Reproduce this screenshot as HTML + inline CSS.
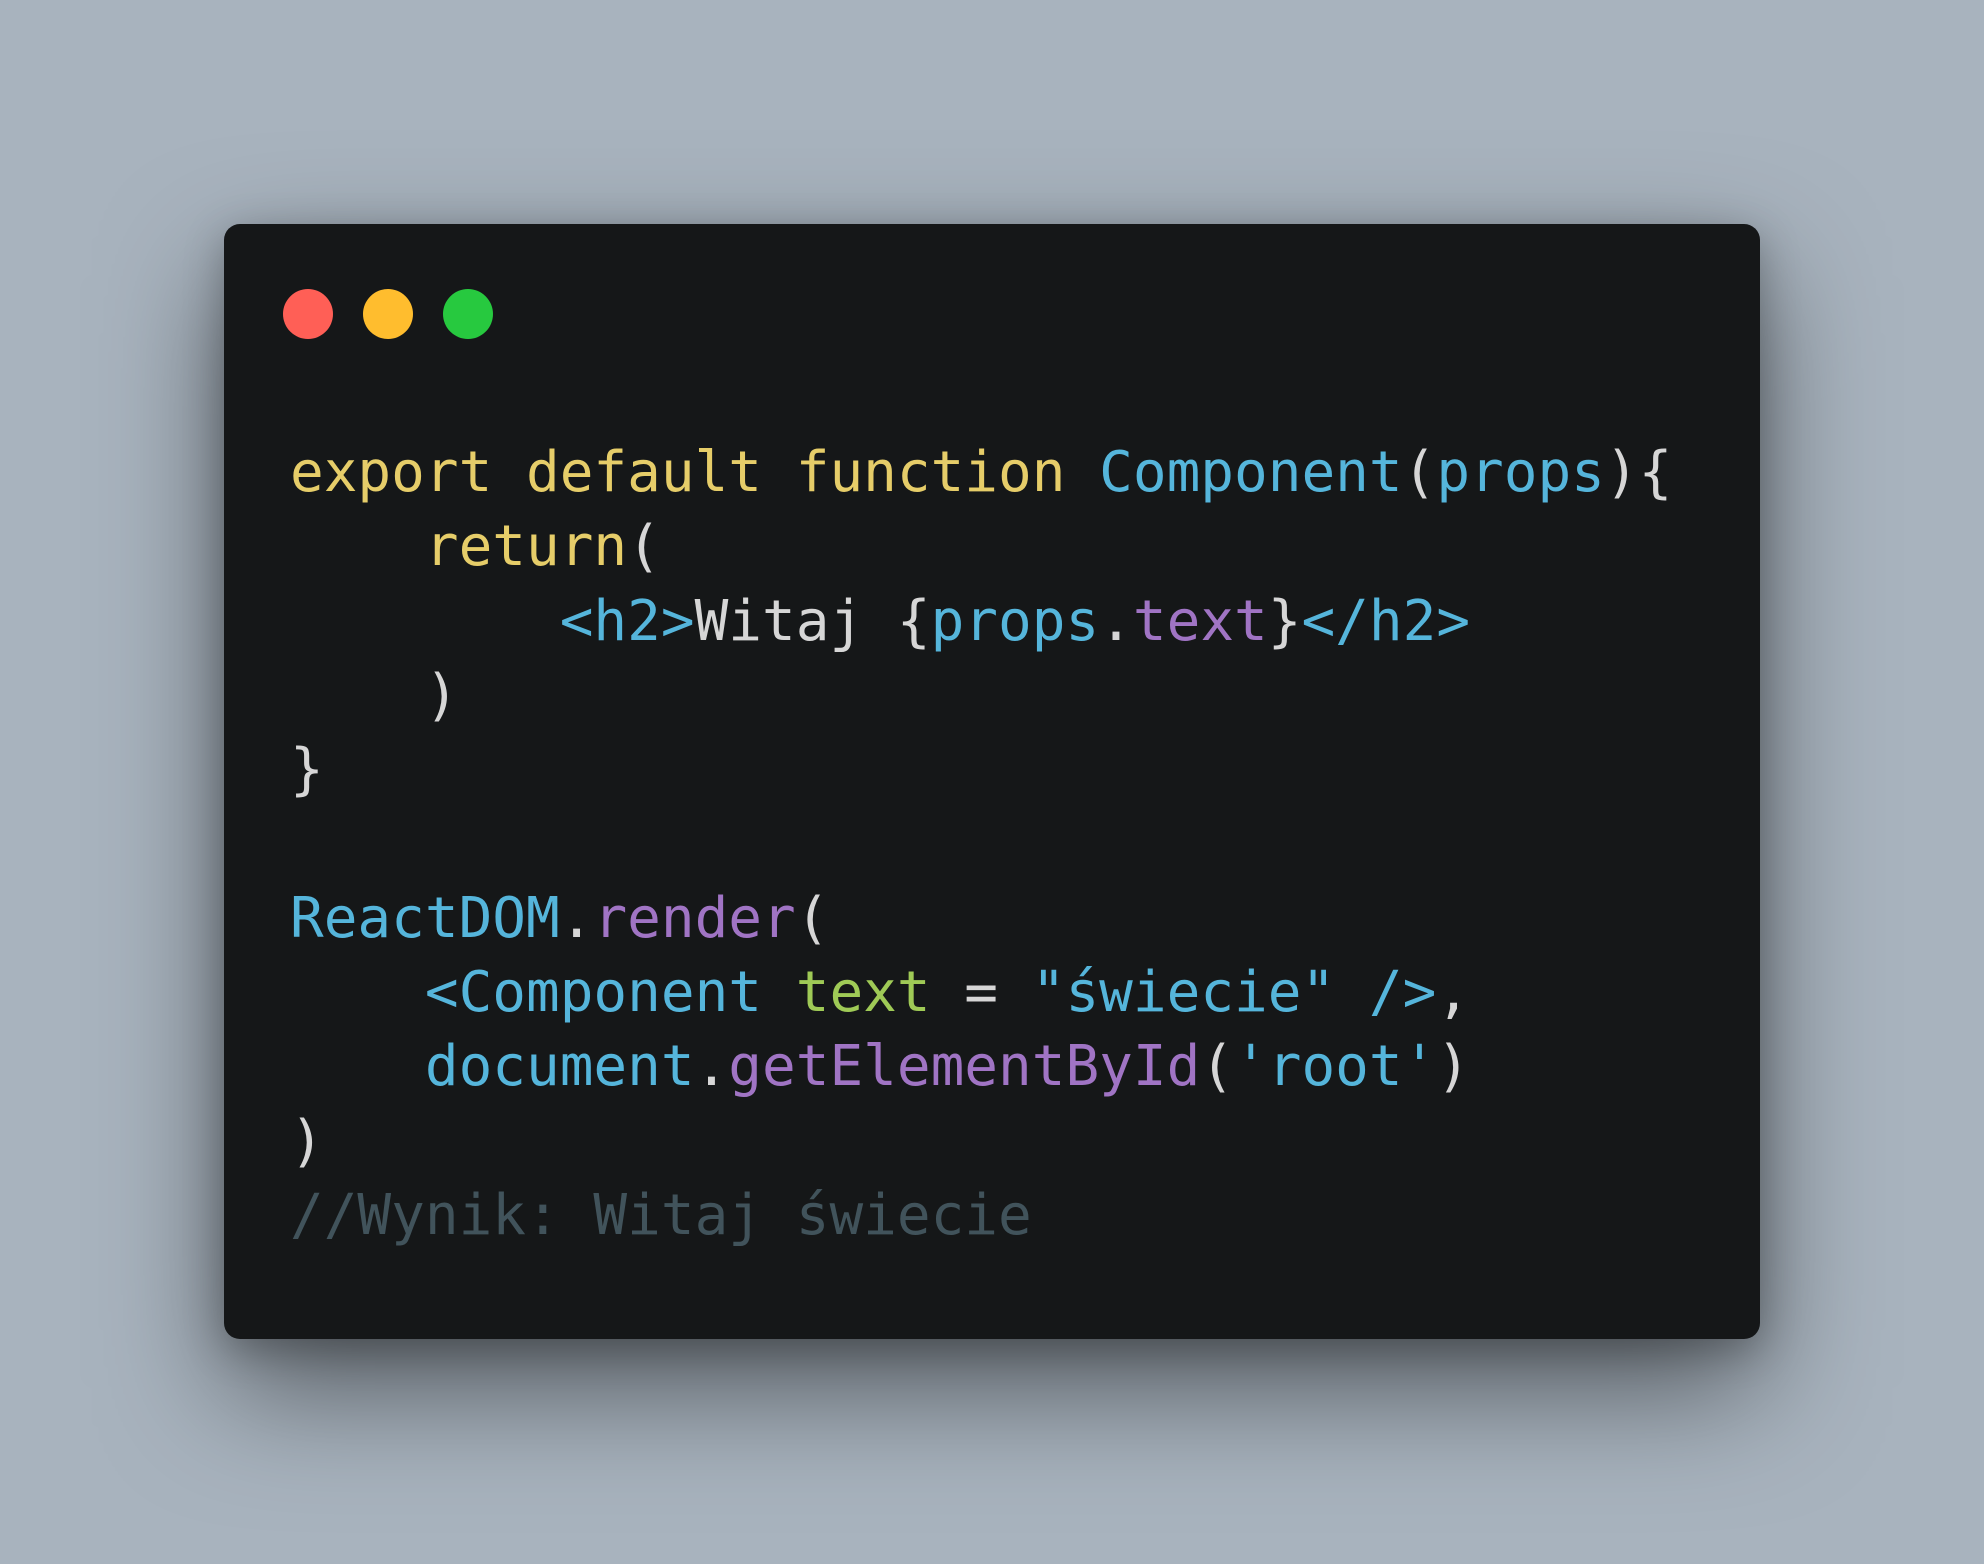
<!DOCTYPE html>
<html><head><meta charset="utf-8"><style>
html,body{margin:0;padding:0}
body{width:1984px;height:1564px;background:#a8b3be;position:relative;overflow:hidden}
.win{position:absolute;left:224px;top:224px;width:1536px;height:1115px;background:#151718;border-radius:16px;box-shadow:0 50px 120px rgba(0,0,0,0.5),0 10px 40px rgba(0,0,0,0.25)}
.dot{position:absolute;top:289px;width:50px;height:50px;border-radius:50%}
pre{position:absolute;left:290px;top:436px;margin:0;font-family:"DejaVu Sans Mono","Liberation Mono",monospace;font-size:56px;line-height:74.3px;color:#d6d6d6;white-space:pre}
.y{color:#e6cd69}.b{color:#55b5db}.p{color:#a074c4}.g{color:#9fca56}.c{color:#41535b}
</style></head><body>
<div class="win"></div>
<div class="dot" style="left:283px;background:#ff5f56"></div>
<div class="dot" style="left:363px;background:#ffbd2e"></div>
<div class="dot" style="left:443px;background:#27c93f"></div>
<pre><span class="y">export default function </span><span class="b">Component</span>(<span class="b">props</span>){
    <span class="y">return</span>(
        <span class="b">&lt;h2&gt;</span>Witaj {<span class="b">props</span>.<span class="p">text</span>}<span class="b">&lt;/h2&gt;</span>
    )
}

<span class="b">ReactDOM</span>.<span class="p">render</span>(
    <span class="b">&lt;Component</span> <span class="g">text</span> = <span class="b">"świecie" /&gt;</span>,
    <span class="b">document</span>.<span class="p">getElementById</span>(<span class="b">'root'</span>)
)
<span class="c">//Wynik: Witaj świecie</span></pre>
</body></html>
